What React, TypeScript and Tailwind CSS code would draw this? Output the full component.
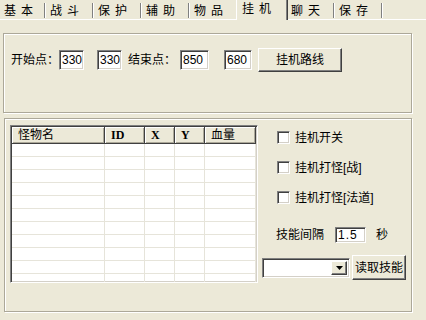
const sunken =
  "border border-t-[#808080] border-l-[#808080] border-b-white border-r-white shadow-[inset_1px_1px_0_#404040,inset_-1px_-1px_0_#d4d0c8]"
const raised =
  "border border-t-white border-l-white border-r-[#404040] border-b-[#404040] shadow-[inset_-1px_-1px_0_#808080]"
const etched =
  "border border-[#aca899] shadow-[inset_1px_1px_0_#fff,1px_1px_0_#fff]"

const tabs = [
  { a: "基", b: "本", w: "w-[46px]", pl: "pl-[4px]", sep: true },
  { a: "战", b: "斗", w: "w-[48px]", pl: "pl-[4px]", sep: true },
  { a: "保", b: "护", w: "w-[48px]", pl: "pl-[4px]", sep: true },
  { a: "辅", b: "助", w: "w-[48px]", pl: "pl-[4px]", sep: true },
  { a: "物", b: "品", w: "w-[46px]", pl: "pl-[4px]", sep: false },
]
const tabsAfter = [
  { a: "聊", b: "天", w: "w-[47px]", pl: "pl-[3px]", sep: true },
  { a: "保", b: "存", w: "w-[48px]", pl: "pl-[4px]", sep: true },
]

const cols = [
  { name: "怪物名", w: "w-[93px]", mono: false },
  { name: "ID", w: "w-[40px]", mono: true },
  { name: "X", w: "w-[30px]", mono: true },
  { name: "Y", w: "w-[30px]", mono: true },
  { name: "血量", w: "flex-1", mono: false },
]

type TabProps = { a: string; b: string; w: string; pl: string; sep: boolean }

const Tab = ({ a, b, w, pl, sep }: TabProps) => (
  <div className={`${w} ${pl} h-full flex items-end`}>
    <div className="flex gap-[5px] text-[12px] leading-[14px] pb-[1px]">
      <span>{a}</span>
      <span>{b}</span>
    </div>
    {sep && (
      <div className="ml-auto mb-[1px] w-[2px] h-[15px] border-l border-l-[#808080] border-r border-r-white" />
    )}
  </div>
)

const Input = ({ value, w }: { value: string; w: string }) => (
  <div
    className={`${w} h-[20px] bg-white ${sunken} flex items-center pl-[2px] text-[12px] leading-none`}>
    {value}
  </div>
)

const Check = ({ label }: { label: string }) => (
  <div className="flex items-center h-[13px] pl-[15px]">
    <div className={`w-[13px] h-[13px] bg-white ${sunken}`} />
    <span className="ml-[5px] text-[12px] leading-none">{label}</span>
  </div>
)

export default function App() {
  return (
    <div className="w-[426px] h-[320px] bg-[#ece9d8] text-black overflow-hidden [font-family:'Liberation_Sans','Noto_Sans_CJK_SC',sans-serif]">
      {/* tab strip */}
      <div className="flex h-[20px] border-b border-white">
        {tabs.map((t, i) => (
          <Tab key={i} {...t} />
        ))}
        <div className="w-[52px] h-[20px] -mb-px bg-[#ece9d8] border-l border-l-white border-r border-r-[#404040] shadow-[inset_-1px_0_0_#808080] pl-[5px] flex items-start pt-[2px]">
          <div className="flex gap-[5px] text-[12px] leading-[14px]">
            <span>挂</span>
            <span>机</span>
          </div>
        </div>
        {tabsAfter.map((t, i) => (
          <Tab key={i} {...t} />
        ))}
      </div>

      {/* path group */}
      <div className={`ml-[3px] mt-[13px] w-[409px] h-[80px] ${etched} pl-[7px] pt-[14px]`}>
        <div className="flex items-center h-[24px] text-[12px]">
          <span className="w-[48px] leading-none">开始点：</span>
          <Input value="330" w="w-[25px]" />
          <div className="ml-[13px]">
            <Input value="330" w="w-[25px]" />
          </div>
          <span className="ml-[6px] w-[48px] leading-none">结束点：</span>
          <div className="ml-[4px]">
            <Input value="850" w="w-[29px]" />
          </div>
          <div className="ml-[15px]">
            <Input value="680" w="w-[28px]" />
          </div>
          <button
            className={`ml-[6px] w-[84px] h-[24px] bg-[#ece9d8] ${raised} text-[12px] leading-none flex items-center justify-center`}>
            挂机路线
          </button>
        </div>
      </div>

      {/* monster group */}
      <div className={`ml-[4px] mt-[5px] w-[408px] h-[194px] ${etched} flex pl-[5px] pt-[6px]`}>
        <div className={`w-[248px] h-[158px] bg-white ${sunken} p-px flex flex-col overflow-hidden`}>
          <div className="flex h-[17px] shrink-0">
            {cols.map((c) => (
              <div
                key={c.name}
                className={`${c.w} h-[17px] bg-[#ece9d8] border-r border-b border-r-[#404040] border-b-[#404040] shadow-[inset_1px_1px_0_#fff,inset_-1px_-1px_0_#aca899] flex items-center pl-[6px] text-[12px] leading-none ${c.mono ? "[font-family:'Liberation_Serif',serif] font-bold" : ""}`}>
                {c.name}
              </div>
            ))}
          </div>
          {Array.from({ length: 11 }).map((_, r) => (
            <div key={r} className="flex h-[13px] shrink-0 border-b border-[#e6e4da]">
              {cols.map((c) => (
                <div key={c.name} className={`${c.w} h-full border-r border-[#e6e4da]`} />
              ))}
            </div>
          ))}
        </div>

        <div className="ml-[4px] w-[144px] flex flex-col">
          <div className="mt-[6px] flex flex-col gap-[17px]">
            <Check label="挂机开关" />
            <Check label="挂机打怪[战]" />
            <Check label="挂机打怪[法道]" />
          </div>
          <div className="mt-[23px] h-[16px] pl-[14px] flex items-center text-[12px]">
            <span className="w-[48px] leading-none">技能间隔</span>
            <div
              className={`ml-[11px] w-[31px] h-[16px] bg-white ${sunken} flex items-center pl-[2px] text-[12px] leading-none tracking-[1px]`}>
              1.5
            </div>
            <span className="ml-[10px] leading-none">秒</span>
          </div>
          <div className="mt-[12px] h-[25px] flex items-center">
            <div className={`w-[88px] h-[20px] bg-white ${sunken} flex justify-end p-[2px]`}>
              <div className={`w-[16px] h-full bg-[#ece9d8] ${raised} flex items-center justify-center`}>
                <svg width="7" height="4" viewBox="0 0 7 4">
                  <path d="M0 0h7L3.5 4z" fill="#000" />
                </svg>
              </div>
            </div>
            <button
              className={`ml-[2px] w-[54px] h-[25px] bg-[#ece9d8] ${raised} text-[12px] leading-none flex items-center justify-center`}>
              读取技能
            </button>
          </div>
        </div>
      </div>
    </div>
  )
}
